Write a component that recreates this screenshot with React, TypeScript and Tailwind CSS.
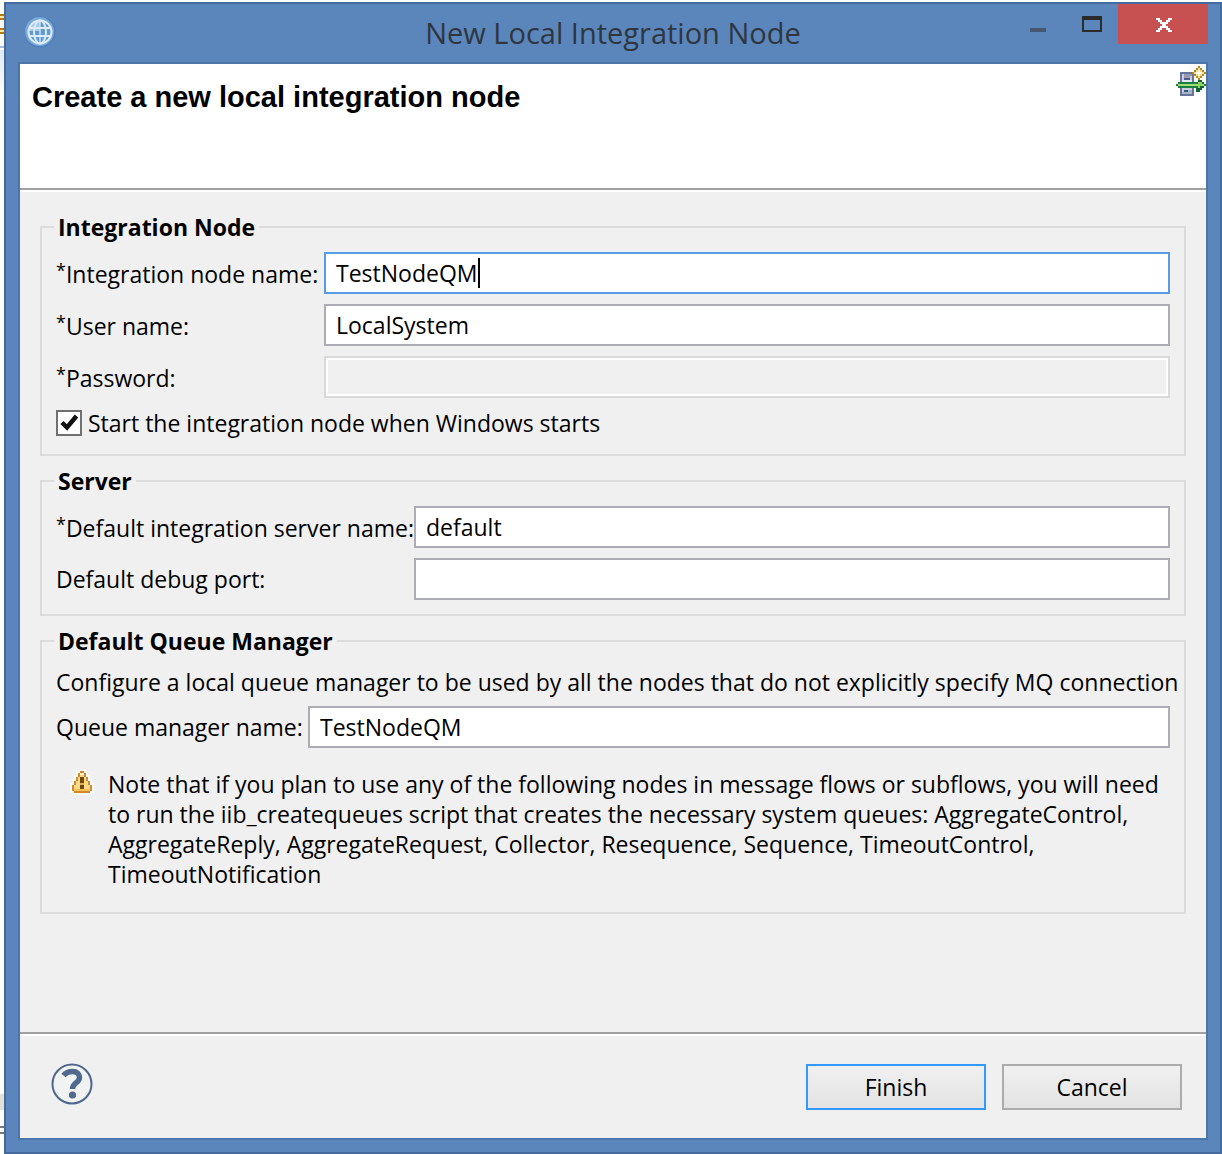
import React from "react";

function GlobeIcon() {
  return (
    <svg width="32" height="32" viewBox="0 0 32 32" fill="none" aria-hidden="true">
      <circle cx="16" cy="16" r="15.500" fill="#4a7fbe" />
      <circle cx="15.500" cy="15.500" r="14.500" fill="#78a9d8" />
      <circle cx="16" cy="16" r="11.500" fill="#5f9bd2" />
      <path d="M5 15Q7 5 16 5V15Z" fill="#a4cae9" />
      <g stroke="#dfebf6" strokeWidth="2">
        <circle cx="16" cy="16" r="11.500" />
        <ellipse cx="16" cy="16" rx="6" ry="11.500" />
        <path d="M5 12H27M5 20H27" />
        <path d="M16 5V27" strokeOpacity="0.6" />
      </g>
    </svg>
  );
}

function NodeIcon() {
  return (
    <svg width="30" height="30" viewBox="0 0 15 15" shapeRendering="crispEdges" aria-hidden="true">
      <path d="M2 3h7v12h-7z" fill="#66749c" />
      <path d="M3 4h5v10h-5z" fill="#c9cddd" />
      <path d="M4 4h4v1h-4z" fill="#9298b6" />
      <path d="M4 5h3v1h-3z" fill="#a698ab" />
      <path d="M4 6h3v1h-3z" fill="#4c5c8c" />
      <path d="M3 7h5v1h-5z" fill="#e4e7f0" />
      <path d="M4 12h2v1h-2z" fill="#2f5a80" />
      <path d="M6 12h2v1h-2z" fill="#9db6c4" />
      <path d="M3 13h5v1h-5z" fill="#a9b3c8" />
      <path d="M1 8h13v1h-13zM0 9h1v1h-1zM1 10h13v1h-13zM14 9h1v1h-1z" fill="#17803f" />
      <path d="M11 6h1v7h-1zM10 11h1v2h-1zM12 7h1v5h-1zM13 8h1v3h-1z" fill="#0d6632" />
      <path d="M1 9h13v1h-13z" fill="#a4dc78" />
      <path d="M11 8h1v3h-1zM12 8h1v2h-1z" fill="#8ed45e" />
      <path d="M11 0h1v7h-1zM8 3h7v1h-7zM10 2h3v3h-3z" fill="#b58a22" />
      <path d="M10 1h3v1h-3zM9 2h1v3h-1zM13 2h1v3h-1zM10 5h3v1h-3z" fill="#b58a22" />
      <path d="M11 1h1v5h-1zM9 3h5v1h-5zM10 2h3v3h-3z" fill="#f3da8c" />
      <path d="M11 2h1v3h-1zM10 3h3v1h-3z" fill="#fffbe6" />
    </svg>
  );
}

function WarningIcon() {
  return (
    <svg width="24" height="26" viewBox="0 0 12 13" shapeRendering="crispEdges" aria-hidden="true">
      <path d="M4 0h4v1h1v2h1v2h1v2h1v5h-1v1h-10v-1h-1v-5h1v-2h1v-2h1v-2h1z" fill="#fbfbfb" />
      <path d="M5 1h2v1h1v2h1v2h1v2h1v3h-1v1h-8v-1h-1v-3h1v-2h1v-2h1v-2h1z" fill="#d08a2c" />
      <path d="M5 2h2v2h1v2h1v2h1v2h-8v-2h1v-2h1v-2h1z" fill="#ffd987" />
      <path d="M5 2h2v1h-2z" fill="#fff1cf" />
      <path d="M2 10h8v1h-8z" fill="#f7c15c" />
      <path d="M5 4h2v3h-2zM5 8h2v2h-2z" fill="#6b4a0c" />
      <path d="M5 7h2v1h-2z" fill="#e5b04f" />
    </svg>
  );
}

function HelpIcon() {
  return (
    <svg width="44" height="44" viewBox="0 0 44 44" fill="none" aria-hidden="true">
      <circle cx="22" cy="22" r="19.500" stroke="#4d658c" strokeWidth="2" fill="#f1f3f2" />
      <path d="M13.500 13.500C16 10.500 19 9.500 22.500 9.500C27 9.500 29.500 12 29.500 15.500C29.500 21 22.500 20.500 22.500 27" stroke="#50698f" strokeWidth="5.500" />
      <circle cx="22.500" cy="33" r="3.600" fill="#50698f" />
    </svg>
  );
}

function Required() {
  return <span className="align-text-top text-[18px] leading-6">*</span>;
}

const input =
  "h-[42px] w-full min-w-0 border-2 border-[#abadb3] bg-white px-2.5 text-black outline-none";
const group = "min-w-0 border-2 border-[#dcdcdc] px-3.5";
const legend = "-ml-0.5 px-1 text-[23px] leading-6 font-bold";

export default function App() {
  return (
    <div className="flex min-h-screen bg-white pt-0.5 font-['Open_Sans','Noto_Sans',sans-serif] text-[23px] leading-[30px] text-black">
      <div className="flex w-1 shrink-0 flex-col" aria-hidden="true">
        <div className="mt-3 h-1.5 border-y-2 border-[#b8780b] bg-[#ffe9a0]" />
        <div className="mt-2 h-1.5 border-y-2 border-[#b8780b] bg-[#ffe9a0]" />
        <div className="mt-3 h-0.5 bg-[#a9c0dc]" />
        <div className="mt-0.5 h-12 bg-linear-to-b from-[#dfe8f5] to-white" />
        <div className="grow" />
        <div className="h-4 bg-[#e4e0d8]" />
        <div className="mt-4 mb-5 h-2 border-y-2 border-[#77777d]" />
      </div>

      <div className="flex min-w-0 grow flex-col border-2 border-[#456a9e] bg-[#5b86bb] px-3 pb-3">
        <header className="grid h-[58px] shrink-0 grid-cols-[1fr_auto_1fr]">
          <div className="pt-3 pl-1.5">
            <GlobeIcon />
          </div>
          <h1 className="self-center text-[29px] leading-10 text-[#2f3640]">New Local Integration Node</h1>
          <div className="flex items-start justify-end">
            <button aria-label="Minimize" className="flex h-10 w-14 justify-center pt-6">
              <span className="h-1 w-4 bg-[#45586f]" />
            </button>
            <button aria-label="Maximize" className="flex h-10 w-[52px] justify-center pt-3">
              <span className="h-4 w-5 border-2 border-t-4 border-[#2b2b2b]" />
            </button>
            <button aria-label="Close" className="flex h-10 w-[90px] items-center justify-center bg-[#c75050] pt-0.5 pl-0.5">
              <svg width="16" height="14" viewBox="0 0 8 7" shapeRendering="crispEdges" fill="#fff" aria-hidden="true">
                <path d="M0 0h2v1h1v1h2v-1h1v-1h2v1h-1v1h-1v1h-1v1h1v1h1v1h1v1h-2v-1h-1v-1h-2v1h-1v1h-2v-1h1v-1h1v-1h1v-1h-1v-1h-1v-1h-1z" />
              </svg>
            </button>
          </div>
        </header>

        <main className="flex grow flex-col border-2 border-[#4c76aa] bg-[#f0f0f0]">
          <div className="flex h-[126px] shrink-0 items-start justify-between border-b-2 border-[#a0a0a0] bg-white pt-0.5 pl-3">
            <h2 className="pt-4 font-['Liberation_Sans',sans-serif] text-[29px] leading-[30px] font-bold">
              Create a new local integration node
            </h2>
            <NodeIcon />
          </div>

          <form className="flex grow flex-col border-t-2 border-white" onSubmit={(e) => e.preventDefault()}>
            <div className="flex grow flex-col gap-[13px] px-5 pt-[23px]">
              <fieldset className={group + " pb-4"}>
                <legend className={legend}>Integration Node</legend>
                <div className="grid grid-cols-[268px_1fr] items-center gap-y-2.5 pt-[13px] whitespace-nowrap">
                  <label htmlFor="node">
                    <Required />
                    Integration node name:
                  </label>
                  <div className="relative flex">
                    <input id="node" defaultValue="TestNodeQM" className={input + " border-[#569de5]!"} />
                    <span className="absolute top-1.5 left-[154px] h-[30px] w-0.5 bg-black" />
                  </div>
                  <label htmlFor="user">
                    <Required />
                    User name:
                  </label>
                  <input id="user" defaultValue="LocalSystem" className={input} />
                  <label htmlFor="pass">
                    <Required />
                    Password:
                  </label>
                  <input
                    id="pass"
                    type="password"
                    disabled
                    className="h-[42px] w-full min-w-0 border-2 border-[#d9d9d9] bg-[#f0f0f0] px-2.5 inset-ring-2 inset-ring-white"
                  />
                </div>
                <div className="flex items-center pt-2.5">
                  <span className="relative flex">
                    <input
                      id="start"
                      type="checkbox"
                      defaultChecked
                      className="peer size-[26px] appearance-none border-2 border-[#707070] bg-white"
                    />
                    <svg
                      className="pointer-events-none absolute inset-0 hidden peer-checked:block"
                      width="26"
                      height="26"
                      viewBox="0 0 26 26"
                      fill="none"
                      aria-hidden="true"
                    >
                      <path d="M6 12.500L11 17.500L20.500 6" stroke="#111" strokeWidth="4.500" />
                    </svg>
                  </span>
                  <label htmlFor="start" className="pl-1.5">
                    Start the integration node when Windows starts
                  </label>
                </div>
              </fieldset>

              <fieldset className={group + " pb-3.5"}>
                <legend className={legend}>Server</legend>
                <div className="grid grid-cols-[358px_1fr] items-center gap-y-2.5 pt-[13px] whitespace-nowrap">
                  <label htmlFor="server">
                    <Required />
                    Default integration server name:
                  </label>
                  <input id="server" defaultValue="default" className={input} />
                  <label htmlFor="port">Default debug port:</label>
                  <input id="port" className={input} />
                </div>
              </fieldset>

              <fieldset className={group + " pb-[23px]"}>
                <legend className={legend}>Default Queue Manager</legend>
                <p className="pt-3.5 whitespace-nowrap">
                  Configure a local queue manager to be used by all the nodes that do not explicitly specify MQ connection
                </p>
                <div className="grid grid-cols-[252px_1fr] items-center pt-[9px]">
                  <label htmlFor="queue">Queue manager name:</label>
                  <input id="queue" defaultValue="TestNodeQM" className={input} />
                </div>
                <div className="flex gap-3.5 pt-[21px] pl-3.5">
                  <span className="shrink-0">
                    <WarningIcon />
                  </span>
                  <p>
                    Note that if you plan to use any of the following nodes in message flows or subflows, you will need
                    to run the iib_createqueues script that creates the necessary system queues: AggregateControl,
                    AggregateReply, AggregateRequest, Collector, Resequence, Sequence, TimeoutControl,
                    TimeoutNotification
                  </p>
                </div>
              </fieldset>
            </div>

            <footer className="flex h-[106px] shrink-0 items-start border-t-2 border-[#a0a0a0] pr-6 pl-[30px] inset-shadow-[0_2px_#fff]">
              <button type="button" aria-label="Help" className="pt-7">
                <HelpIcon />
              </button>
              <div className="flex grow justify-end gap-4 pt-[30px]">
                <button className="h-[46px] w-[180px] border-2 border-[#3399ff] bg-linear-to-b from-[#f0f0f0] to-[#e3e3e3]">
                  Finish
                </button>
                <button
                  type="button"
                  className="h-[46px] w-[180px] border-2 border-[#acacac] bg-linear-to-b from-[#f0f0f0] to-[#e3e3e3]"
                >
                  Cancel
                </button>
              </div>
            </footer>
          </form>
        </main>
      </div>
    </div>
  );
}
